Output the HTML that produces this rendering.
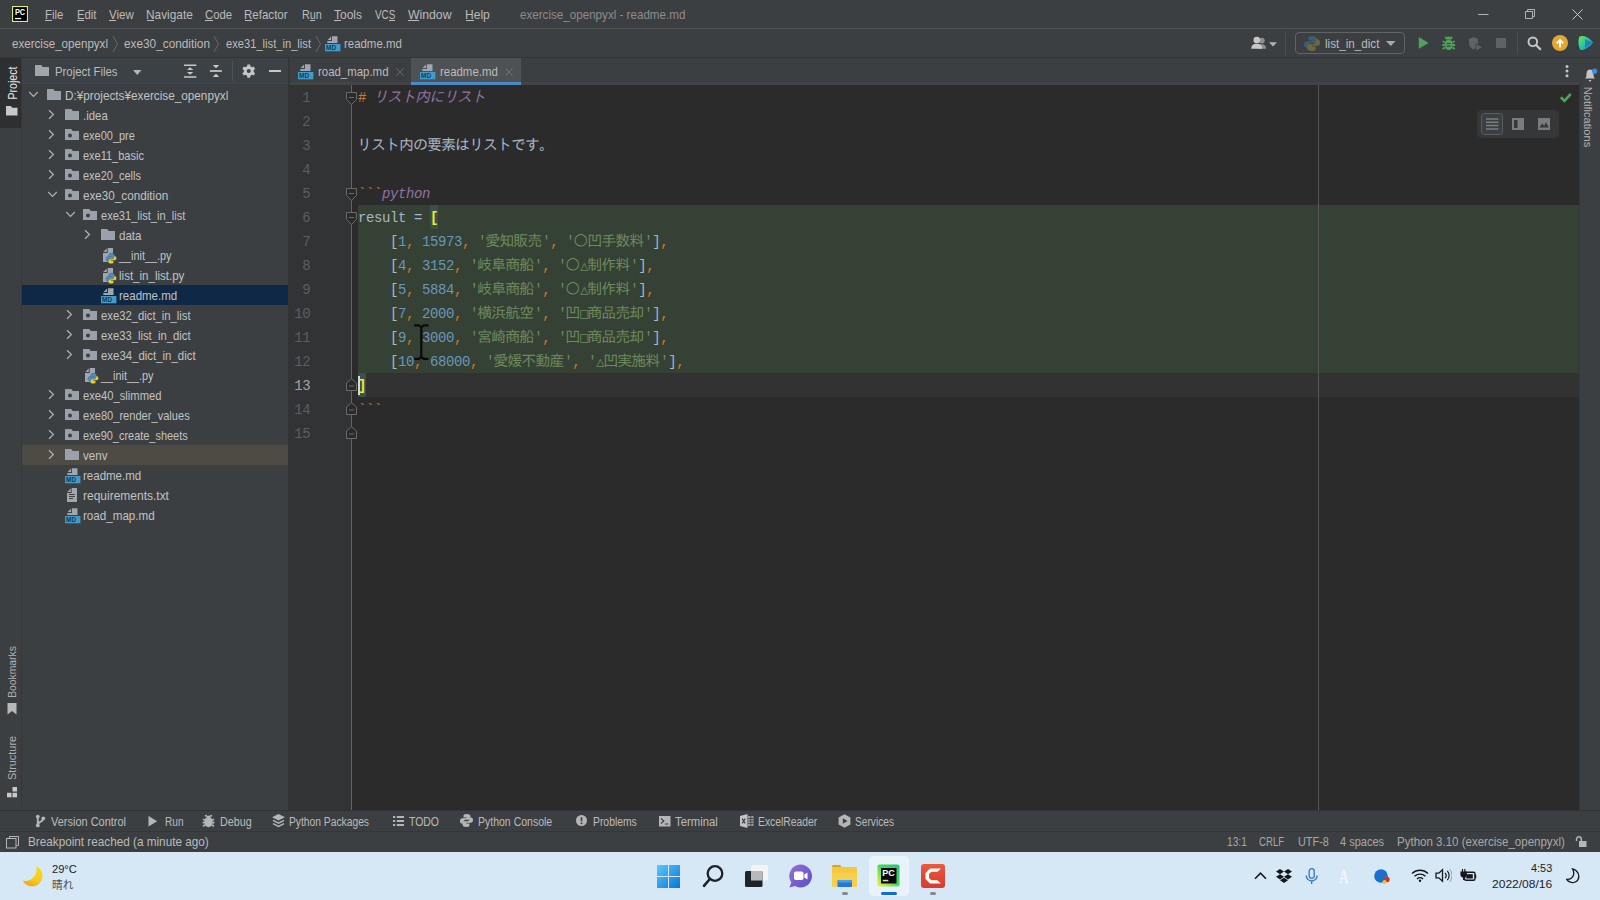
<!DOCTYPE html>
<html lang="ja"><head><meta charset="utf-8"><title>exercise_openpyxl - readme.md</title>
<style>
*{box-sizing:border-box}
html,body{margin:0;padding:0}
body{width:1600px;height:900px;overflow:hidden;background:#3c3f41;position:relative;font-family:"Liberation Sans","Noto Sans CJK JP",sans-serif}
#root{position:absolute;left:0;top:0;width:1600px;height:900px;overflow:hidden}
#root>div,#root>svg,#root>span{position:absolute;display:block}
.u{font-family:"Liberation Sans","Noto Sans CJK JP",sans-serif;line-height:20px;white-space:pre;transform-origin:0 50%}
.m{font-family:"Liberation Mono","Noto Sans CJK JP",monospace;line-height:20px;white-space:pre;transform-origin:0 50%;letter-spacing:-0.4px}
.j{font-family:IPAGothic,"Noto Sans CJK JP",sans-serif;font-size:15px;letter-spacing:-1px;line-height:0;margin-left:-1px;margin-right:1px}
.g{font-family:"DejaVu Sans Mono",monospace;font-size:13.3px;letter-spacing:0;line-height:0}
</style></head>
<body><div id="root">
<div style="left:0px;top:0px;width:1600px;height:28px;background:#3c3f41;"></div>
<div style="left:0px;top:28px;width:1600px;height:1px;background:#505254;"></div>
<div style="left:0px;top:29px;width:1600px;height:28px;background:#3c3f41;"></div>
<div style="left:0px;top:57px;width:1600px;height:1px;background:#333537;"></div>
<div style="left:0px;top:58px;width:22px;height:752px;background:#3c3f41;"></div>
<div style="left:0px;top:58px;width:21px;height:70px;background:#2d2f30;"></div>
<div style="left:21px;top:58px;width:1px;height:752px;background:#353739;"></div>
<div style="left:22px;top:58px;width:266px;height:26px;background:#3c4146;border-bottom:2px solid #3b444f"></div>
<div style="left:22px;top:84px;width:266px;height:726px;background:#3c3f41;"></div>
<div style="left:22px;top:285px;width:266px;height:20px;background:#0f2846;"></div>
<div style="left:22px;top:445px;width:266px;height:20px;background:#4e4b45;"></div>
<div style="left:288px;top:58px;width:2px;height:27px;background:#35383b;"></div>
<div style="left:290px;top:58px;width:1289px;height:27px;background:#3c3f41;"></div>
<div style="left:290px;top:82px;width:1289px;height:3px;background:#424446;"></div>
<div style="left:411px;top:58px;width:110px;height:24px;background:#4e5254;"></div>
<div style="left:411px;top:82px;width:110px;height:3px;background:#4a88c7;"></div>
<div style="left:290px;top:85px;width:1290px;height:725px;background:#2b2b2b;"></div>
<div style="left:288px;top:85px;width:64px;height:725px;background:#313335;"></div>
<div style="left:358px;top:205px;width:1221px;height:168px;background:#364135;"></div>
<div style="left:358px;top:373px;width:1221px;height:24px;background:#323232;"></div>
<div style="left:430px;top:205px;width:8px;height:24px;background:#3d4f4b;"></div>
<div style="left:358px;top:373px;width:8px;height:24px;background:#3d4f4b;"></div>
<div style="left:351px;top:85px;width:1px;height:725px;background:#646464;"></div>
<div style="left:1318px;top:85px;width:1px;height:725px;background:#555555;"></div>
<div style="left:1579px;top:58px;width:21px;height:752px;background:#3c3f41;"></div>
<div style="left:1579px;top:85px;width:1px;height:725px;background:#353739;"></div>
<div style="left:0px;top:810px;width:1600px;height:42px;background:#3c3f41;"></div>
<div style="left:0px;top:810px;width:1600px;height:1px;background:#323232;"></div>
<div style="left:0px;top:831px;width:1600px;height:1px;background:#343638;"></div>
<div style="left:0px;top:852px;width:1600px;height:48px;background:#d6e7f6;"></div>
<div style="left:870px;top:857px;width:38px;height:38px;background:#e9f1fa;border-radius:4px;box-shadow:0 0 0 1px rgba(255,255,255,.5)"></div>
<svg style="left:28.3px;top:91px;" width="11" height="7" viewBox="0 0 11 7"><path d="M1.200 1l4.300 4.400L9.800 1" fill="none" stroke="#afb1b3" stroke-width="1.200"/></svg>
<svg style="left:47px;top:89px;" width="14" height="11" viewBox="0 0 14 11"><path d="M0 0h6.2l1.6 2H14v11H0z" fill="#9ba1ab"/></svg>
<svg style="left:48.3px;top:109px;" width="7" height="11" viewBox="0 0 7 11"><path d="M1 1.2l4.4 4.3L1 9.800" fill="none" stroke="#afb1b3" stroke-width="1.200"/></svg>
<svg style="left:65px;top:109px;" width="14" height="11" viewBox="0 0 14 11"><path d="M0 0h6.2l1.6 2H14v11H0z" fill="#9ba1ab"/></svg>
<svg style="left:48.3px;top:129px;" width="7" height="11" viewBox="0 0 7 11"><path d="M1 1.2l4.4 4.3L1 9.800" fill="none" stroke="#afb1b3" stroke-width="1.200"/></svg>
<svg style="left:65px;top:129px;" width="14" height="11" viewBox="0 0 14 11"><path d="M0 0h6.2l1.6 2H14v11H0z" fill="#9ba1ab"/><circle cx="5" cy="6.6" r="2" fill="#3c3f41"/></svg>
<svg style="left:48.3px;top:149px;" width="7" height="11" viewBox="0 0 7 11"><path d="M1 1.2l4.4 4.3L1 9.800" fill="none" stroke="#afb1b3" stroke-width="1.200"/></svg>
<svg style="left:65px;top:149px;" width="14" height="11" viewBox="0 0 14 11"><path d="M0 0h6.2l1.6 2H14v11H0z" fill="#9ba1ab"/><circle cx="5" cy="6.6" r="2" fill="#3c3f41"/></svg>
<svg style="left:48.3px;top:169px;" width="7" height="11" viewBox="0 0 7 11"><path d="M1 1.2l4.4 4.3L1 9.800" fill="none" stroke="#afb1b3" stroke-width="1.200"/></svg>
<svg style="left:65px;top:169px;" width="14" height="11" viewBox="0 0 14 11"><path d="M0 0h6.2l1.6 2H14v11H0z" fill="#9ba1ab"/><circle cx="5" cy="6.6" r="2" fill="#3c3f41"/></svg>
<svg style="left:46.5px;top:191px;" width="11" height="7" viewBox="0 0 11 7"><path d="M1.200 1l4.300 4.400L9.800 1" fill="none" stroke="#afb1b3" stroke-width="1.200"/></svg>
<svg style="left:65px;top:189px;" width="14" height="11" viewBox="0 0 14 11"><path d="M0 0h6.2l1.6 2H14v11H0z" fill="#9ba1ab"/><circle cx="5" cy="6.6" r="2" fill="#3c3f41"/></svg>
<svg style="left:64.5px;top:211px;" width="11" height="7" viewBox="0 0 11 7"><path d="M1.200 1l4.300 4.400L9.800 1" fill="none" stroke="#afb1b3" stroke-width="1.200"/></svg>
<svg style="left:83px;top:209px;" width="14" height="11" viewBox="0 0 14 11"><path d="M0 0h6.2l1.6 2H14v11H0z" fill="#9ba1ab"/><circle cx="5" cy="6.6" r="2" fill="#3c3f41"/></svg>
<svg style="left:84.3px;top:229px;" width="7" height="11" viewBox="0 0 7 11"><path d="M1 1.2l4.4 4.3L1 9.800" fill="none" stroke="#afb1b3" stroke-width="1.200"/></svg>
<svg style="left:101px;top:229px;" width="14" height="11" viewBox="0 0 14 11"><path d="M0 0h6.2l1.6 2H14v11H0z" fill="#9ba1ab"/></svg>
<svg style="left:103px;top:248px;" width="14" height="16" viewBox="0 0 14 16"><path d="M4.700 0H10v14H0V4.900h4.700z" fill="#a0a5ae"/><path d="M.200 4h3.600V.400z" fill="#a0a5ae"/><g transform="translate(3.200 5.400) scale(.64)"><path d="M7.800 0C5 0 4.300 1.100 4.300 2.500v1.900h3.800v.8H2.700C1 5.200 0 6.400 0 8.500s1 3.300 2.600 3.300h1.700V9.700c0-1.500 1.200-2.700 2.700-2.700h3.700c1.200 0 2.100-1 2.100-2.200V2.500C12.800 1.100 11.300 0 7.800 0z" fill="#3e8fd0" stroke="#3c3f41" stroke-width=".8"/><path d="M8.200 16c2.800 0 3.500-1.100 3.500-2.500v-1.900H7.900v-.8h5.400c1.700 0 2.700-1.200 2.700-3.300s-1-3.300-2.600-3.300h-1.700v2.100c0 1.500-1.200 2.700-2.700 2.700H5.300c-1.200 0-2.100 1-2.100 2.200v2.300c0 1.400 1.500 2.500 5 2.500z" fill="#f2d21f" stroke="#3c3f41" stroke-width=".5"/><path d="M7.800 0C5 0 4.300 1.100 4.300 2.500v1.900h3.800v.8H2.700C1 5.200 0 6.400 0 8.500s1 3.300 2.600 3.300h1.700V9.700c0-1.500 1.200-2.700 2.700-2.700h3.700c1.200 0 2.100-1 2.100-2.200V2.500C12.800 1.100 11.300 0 7.800 0z" fill="#3e8fd0"/></g></svg>
<svg style="left:103px;top:268px;" width="14" height="16" viewBox="0 0 14 16"><path d="M4.700 0H10v14H0V4.900h4.700z" fill="#a0a5ae"/><path d="M.200 4h3.600V.400z" fill="#a0a5ae"/><g transform="translate(3.200 5.400) scale(.64)"><path d="M7.800 0C5 0 4.300 1.100 4.300 2.500v1.900h3.800v.8H2.700C1 5.200 0 6.400 0 8.500s1 3.300 2.600 3.300h1.700V9.700c0-1.500 1.200-2.700 2.700-2.700h3.700c1.200 0 2.100-1 2.100-2.200V2.500C12.800 1.100 11.300 0 7.800 0z" fill="#3e8fd0" stroke="#3c3f41" stroke-width=".8"/><path d="M8.200 16c2.800 0 3.500-1.100 3.500-2.500v-1.900H7.900v-.8h5.400c1.700 0 2.700-1.200 2.700-3.300s-1-3.300-2.600-3.300h-1.700v2.100c0 1.500-1.200 2.700-2.700 2.700H5.300c-1.200 0-2.100 1-2.100 2.200v2.300c0 1.400 1.500 2.500 5 2.500z" fill="#f2d21f" stroke="#3c3f41" stroke-width=".5"/><path d="M7.800 0C5 0 4.300 1.100 4.300 2.500v1.900h3.800v.8H2.700C1 5.200 0 6.400 0 8.500s1 3.300 2.600 3.300h1.700V9.700c0-1.500 1.200-2.700 2.700-2.700h3.700c1.200 0 2.100-1 2.100-2.200V2.500C12.800 1.100 11.300 0 7.800 0z" fill="#3e8fd0"/></g></svg>
<svg style="left:100.5px;top:288px;" width="16" height="16" viewBox="0 0 16 16"><path d="M7 .2h5.500V7H2.300V4.900H7z" fill="#a0a5ae"/><path d="M2.500 4h3.600V.500z" fill="#a0a5ae"/><rect x="0" y="8" width="15.400" height="7.300" fill="#439bc8"/><text x="1.100" y="14.100" font-family="Liberation Sans,sans-serif" font-size="6.800" font-weight="bold" fill="#103d5e" textLength="10" lengthAdjust="spacingAndGlyphs">MD</text></svg>
<svg style="left:66.3px;top:309px;" width="7" height="11" viewBox="0 0 7 11"><path d="M1 1.2l4.4 4.3L1 9.800" fill="none" stroke="#afb1b3" stroke-width="1.200"/></svg>
<svg style="left:83px;top:309px;" width="14" height="11" viewBox="0 0 14 11"><path d="M0 0h6.2l1.6 2H14v11H0z" fill="#9ba1ab"/><circle cx="5" cy="6.6" r="2" fill="#3c3f41"/></svg>
<svg style="left:66.3px;top:329px;" width="7" height="11" viewBox="0 0 7 11"><path d="M1 1.2l4.4 4.3L1 9.800" fill="none" stroke="#afb1b3" stroke-width="1.200"/></svg>
<svg style="left:83px;top:329px;" width="14" height="11" viewBox="0 0 14 11"><path d="M0 0h6.2l1.6 2H14v11H0z" fill="#9ba1ab"/><circle cx="5" cy="6.6" r="2" fill="#3c3f41"/></svg>
<svg style="left:66.3px;top:349px;" width="7" height="11" viewBox="0 0 7 11"><path d="M1 1.2l4.4 4.3L1 9.800" fill="none" stroke="#afb1b3" stroke-width="1.200"/></svg>
<svg style="left:83px;top:349px;" width="14" height="11" viewBox="0 0 14 11"><path d="M0 0h6.2l1.6 2H14v11H0z" fill="#9ba1ab"/><circle cx="5" cy="6.6" r="2" fill="#3c3f41"/></svg>
<svg style="left:85px;top:368px;" width="14" height="16" viewBox="0 0 14 16"><path d="M4.700 0H10v14H0V4.900h4.700z" fill="#a0a5ae"/><path d="M.200 4h3.600V.400z" fill="#a0a5ae"/><g transform="translate(3.200 5.400) scale(.64)"><path d="M7.800 0C5 0 4.300 1.100 4.300 2.500v1.900h3.800v.8H2.700C1 5.200 0 6.400 0 8.500s1 3.300 2.600 3.300h1.700V9.700c0-1.500 1.200-2.700 2.700-2.700h3.700c1.200 0 2.100-1 2.100-2.200V2.500C12.800 1.100 11.300 0 7.800 0z" fill="#3e8fd0" stroke="#3c3f41" stroke-width=".8"/><path d="M8.200 16c2.800 0 3.500-1.100 3.500-2.500v-1.900H7.900v-.8h5.400c1.700 0 2.700-1.200 2.700-3.300s-1-3.300-2.600-3.300h-1.700v2.100c0 1.500-1.200 2.700-2.700 2.700H5.300c-1.200 0-2.100 1-2.100 2.200v2.300c0 1.400 1.500 2.500 5 2.500z" fill="#f2d21f" stroke="#3c3f41" stroke-width=".5"/><path d="M7.800 0C5 0 4.300 1.100 4.300 2.500v1.900h3.800v.8H2.700C1 5.200 0 6.400 0 8.500s1 3.300 2.600 3.300h1.700V9.700c0-1.500 1.200-2.700 2.700-2.700h3.700c1.200 0 2.100-1 2.100-2.200V2.500C12.800 1.100 11.300 0 7.800 0z" fill="#3e8fd0"/></g></svg>
<svg style="left:48.3px;top:389px;" width="7" height="11" viewBox="0 0 7 11"><path d="M1 1.2l4.4 4.3L1 9.800" fill="none" stroke="#afb1b3" stroke-width="1.200"/></svg>
<svg style="left:65px;top:389px;" width="14" height="11" viewBox="0 0 14 11"><path d="M0 0h6.2l1.6 2H14v11H0z" fill="#9ba1ab"/><circle cx="5" cy="6.6" r="2" fill="#3c3f41"/></svg>
<svg style="left:48.3px;top:409px;" width="7" height="11" viewBox="0 0 7 11"><path d="M1 1.2l4.4 4.3L1 9.800" fill="none" stroke="#afb1b3" stroke-width="1.200"/></svg>
<svg style="left:65px;top:409px;" width="14" height="11" viewBox="0 0 14 11"><path d="M0 0h6.2l1.6 2H14v11H0z" fill="#9ba1ab"/><circle cx="5" cy="6.6" r="2" fill="#3c3f41"/></svg>
<svg style="left:48.3px;top:429px;" width="7" height="11" viewBox="0 0 7 11"><path d="M1 1.2l4.4 4.3L1 9.800" fill="none" stroke="#afb1b3" stroke-width="1.200"/></svg>
<svg style="left:65px;top:429px;" width="14" height="11" viewBox="0 0 14 11"><path d="M0 0h6.2l1.6 2H14v11H0z" fill="#9ba1ab"/><circle cx="5" cy="6.6" r="2" fill="#3c3f41"/></svg>
<svg style="left:48.3px;top:449px;" width="7" height="11" viewBox="0 0 7 11"><path d="M1 1.2l4.4 4.3L1 9.800" fill="none" stroke="#afb1b3" stroke-width="1.200"/></svg>
<svg style="left:65px;top:449px;" width="14" height="11" viewBox="0 0 14 11"><path d="M0 0h6.2l1.6 2H14v11H0z" fill="#9ba1ab"/></svg>
<svg style="left:64.5px;top:468px;" width="16" height="16" viewBox="0 0 16 16"><path d="M7 .2h5.500V7H2.300V4.900H7z" fill="#a0a5ae"/><path d="M2.500 4h3.600V.500z" fill="#a0a5ae"/><rect x="0" y="8" width="15.400" height="7.300" fill="#439bc8"/><text x="1.100" y="14.100" font-family="Liberation Sans,sans-serif" font-size="6.800" font-weight="bold" fill="#103d5e" textLength="10" lengthAdjust="spacingAndGlyphs">MD</text></svg>
<svg style="left:67px;top:488px;" width="10" height="14" viewBox="0 0 10 14"><path d="M4.700 0H10v14H0V4.900h4.700z" fill="#a0a5ae"/><path d="M.200 4h3.600V.400z" fill="#a0a5ae"/><path d="M2 6.500h5.800M2 8.500h5.800M2 10.500h4" stroke="#3c3f41" stroke-width="1"/></svg>
<svg style="left:64.5px;top:508px;" width="16" height="16" viewBox="0 0 16 16"><path d="M7 .2h5.500V7H2.300V4.900H7z" fill="#a0a5ae"/><path d="M2.500 4h3.600V.500z" fill="#a0a5ae"/><rect x="0" y="8" width="15.400" height="7.300" fill="#439bc8"/><text x="1.100" y="14.100" font-family="Liberation Sans,sans-serif" font-size="6.800" font-weight="bold" fill="#103d5e" textLength="10" lengthAdjust="spacingAndGlyphs">MD</text></svg>
<svg style="left:12px;top:6px;" width="16" height="16" viewBox="0 0 16 16"><rect width="16" height="16" fill="#d6f25c"/><rect x="1.100" y="1.100" width="13.800" height="13.800" fill="#000"/><text x="2.900" y="9.100" font-family="Liberation Sans,sans-serif" font-weight="bold" font-size="8.200" fill="#fff" textLength="10.300" lengthAdjust="spacingAndGlyphs">PC</text><rect x="3" y="11.900" width="6.200" height="1.300" fill="#fff"/></svg>
<svg style="left:1477px;top:9px;" width="12" height="11" viewBox="0 0 12 11"><path d="M1 5.500h10.500" stroke="#b4b4b4" stroke-width="1"/></svg>
<svg style="left:1524px;top:8px;" width="12" height="12" viewBox="0 0 12 12"><path d="M1.500 3.500h7v7h-7z M3.500 3.500v-2h7v7h-2" fill="none" stroke="#b4b4b4" stroke-width="1"/></svg>
<svg style="left:1572px;top:9px;" width="11" height="11" viewBox="0 0 11 11"><path d="M.5.500l10 10M10.500.500l-10 10" stroke="#c8c8c8" stroke-width="1"/></svg>
<svg style="left:111.5px;top:35px;" width="7" height="18" viewBox="0 0 7 18"><path d="M1 1l4.500 8L1 17" fill="none" stroke="#66696b" stroke-width="1"/></svg>
<svg style="left:213px;top:35px;" width="7" height="18" viewBox="0 0 7 18"><path d="M1 1l4.500 8L1 17" fill="none" stroke="#66696b" stroke-width="1"/></svg>
<svg style="left:314.5px;top:35px;" width="7" height="18" viewBox="0 0 7 18"><path d="M1 1l4.500 8L1 17" fill="none" stroke="#66696b" stroke-width="1"/></svg>
<svg style="left:325px;top:35.5px;" width="16" height="16" viewBox="0 0 16 16"><path d="M7 .2h5.500V7H2.300V4.900H7z" fill="#a0a5ae"/><path d="M2.500 4h3.600V.500z" fill="#a0a5ae"/><rect x="0" y="8" width="15.400" height="7.300" fill="#439bc8"/><text x="1.100" y="14.100" font-family="Liberation Sans,sans-serif" font-size="6.800" font-weight="bold" fill="#103d5e" textLength="10" lengthAdjust="spacingAndGlyphs">MD</text></svg>
<svg style="left:1251px;top:36px;" width="27" height="14" viewBox="0 0 27 14"><circle cx="10.800" cy="4.600" r="2.900" fill="#8d8f91"/><path d="M6.500 12.800c0-3.300 1.600-4.600 4.300-4.600s4.300 1.300 4.300 4.600z" fill="#8d8f91"/><circle cx="5.800" cy="4" r="3.300" fill="#c8c8c8"/><path d="M.300 12.800c0-3.600 2-5 5.500-5s5.500 1.400 5.500 5z" fill="#c8c8c8"/><path d="M18 6.200h8l-4 4.300z" fill="#b0b2b4"/></svg>
<div style="left:1285px;top:31px;width:1px;height:25px;background:#4d5052;"></div>
<div style="left:1295px;top:32px;width:110px;height:22px;border:1px solid #616365;border-radius:4px"></div>
<svg style="left:1304px;top:36px;" width="16" height="15" viewBox="0 0 16 15"><g opacity=".62"><path d="M7.800 0C5 0 4.300 1.100 4.300 2.500v1.900h3.800v.8H2.700C1 5.200 0 6.400 0 8.500s1 3.300 2.600 3.300h1.700V9.700c0-1.500 1.200-2.700 2.700-2.700h3.700c1.200 0 2.100-1 2.100-2.200V2.500C12.800 1.100 11.300 0 7.800 0z" fill="#3d6f94"/><path d="M8.200 15c2.800 0 3.500-1.100 3.500-2.500v-1.900H7.900v-.8h5.400c1.700 0 2.700-1.200 2.700-3.300s-1-3.300-2.600-3.300h-1.700v2.100c0 1.500-1.200 2.700-2.700 2.700H5.300c-1.200 0-2.100 1-2.100 2.200v2.300c0 1.400 1.500 2.500 5 2.500z" fill="#8f8437"/></g></svg>
<svg style="left:1386px;top:41px;" width="10" height="6" viewBox="0 0 10 6"><path d="M0 0h9.500L4.750 5z" fill="#a8aaac"/></svg>
<svg style="left:1418px;top:37px;" width="11" height="12" viewBox="0 0 11 12"><path d="M.800 0l9.800 5.900-9.800 5.900z" fill="#4fa25b"/></svg>
<svg style="left:1442px;top:36px;" width="14" height="15" viewBox="0 0 14 15"><ellipse cx="6.700" cy="8.700" rx="4.200" ry="5.300" fill="#4fa25b"/><path d="M3.700 3.600a3 3 0 0 1 6 0z" fill="#4fa25b"/><path d="M4.500 2.600L3.200.700M8.900 2.600L10.200.700M2.800 6.300L.700 5.200M10.600 6.300l2.100-1.100M2.500 9H.300M10.900 9h2.200M2.800 11.600L.700 13M10.600 11.600l2.100 1.400" stroke="#4fa25b" stroke-width="1.800"/><path d="M4.700 7.500h4M4.700 10.200h4" stroke="#3c3f41" stroke-width="1.200"/></svg>
<svg style="left:1468px;top:37px;" width="15" height="14" viewBox="0 0 15 14"><path d="M1 1.500C3 1.500 4.500.800 5.500 0c1 .800 2.500 1.500 4.500 1.500V6c0 3-2 5.500-4.500 6.500C3 11.500 1 9 1 6z" fill="#606366"/><path d="M8 6.500l6.500 3.700L8 14z" fill="#606366" stroke="#3c3f41" stroke-width=".800"/></svg>
<div style="left:1496px;top:38px;width:10px;height:10px;background:#5e6062;"></div>
<div style="left:1517px;top:32px;width:1px;height:21px;background:#4d5052;"></div>
<svg style="left:1527px;top:36px;" width="15" height="15" viewBox="0 0 15 15"><circle cx="5.800" cy="5.800" r="4.300" fill="none" stroke="#c8c8c8" stroke-width="1.900"/><path d="M9 9l4.800 4.800" stroke="#c8c8c8" stroke-width="2.200"/></svg>
<svg style="left:1552px;top:35px;" width="16" height="16" viewBox="0 0 16 16"><circle cx="8" cy="8" r="8" fill="#e2a832"/><path d="M8 12.500V5.500M4.800 8.300L8 5l3.200 3.300" fill="none" stroke="#fff" stroke-width="1.800"/></svg>
<svg style="left:1578px;top:35px;" width="16" height="16" viewBox="0 0 16 16"><defs><linearGradient id="tbg" x1="0" y1="0" x2="1" y2="1"><stop offset="0" stop-color="#7ee04f"/><stop offset=".5" stop-color="#22c9a6"/><stop offset="1" stop-color="#2a6fd6"/></linearGradient></defs><path d="M1.500 1.500C6 -.500 12 3 15 7.500 12 12 6 15.500 2.500 15 0 11 0 5 1.500 1.500z" fill="url(#tbg)"/><path d="M7 4l7.500 3.500L7 13z" fill="#1e5fc4" opacity=".6"/></svg>
<svg style="left:35px;top:65px;" width="14" height="11" viewBox="0 0 14 11"><path d="M0 0h6.2l1.6 2H14v11H0z" fill="#a0a6ae"/></svg>
<svg style="left:133px;top:70px;" width="9" height="6" viewBox="0 0 9 6"><path d="M0 0h8.500L4.250 5z" fill="#b4b6b8"/></svg>
<svg style="left:184px;top:64px;" width="13" height="15" viewBox="0 0 13 15"><path d="M0 1.150h12.300M0 12.950h12.300" stroke="#c8c8c8" stroke-width="1.500"/><path d="M6.100 3.200l3.200 2.700h-6.400zM6.100 10.700l3.200-2.700h-6.400z" fill="#c8c8c8"/></svg>
<svg style="left:209px;top:64px;" width="14" height="15" viewBox="0 0 14 15"><path d="M.900 7h12" stroke="#c8c8c8" stroke-width="1.700"/><path d="M7 4.300l3.300-3.300h-6.600zM7 9.700l3.300 3.400h-6.600z" fill="#c8c8c8"/></svg>
<div style="left:232px;top:61px;width:1px;height:20px;background:#4f5254;"></div>
<svg style="left:242px;top:64px;" width="14" height="15" viewBox="0 0 14 15"><path d="M5.14 2.37L5.36 0.55L8.14 0.55L8.36 2.37L10.05 3.34L11.73 2.62L13.12 5.03L11.65 6.12L11.65 8.08L13.12 9.17L11.73 11.58L10.05 10.86L8.36 11.83L8.14 13.65L5.36 13.65L5.14 11.83L3.45 10.86L1.77 11.58L0.38 9.17L1.85 8.08L1.85 6.12L0.38 5.03L1.77 2.62L3.45 3.34z" fill="#c5c5c5"/><circle cx="6.75" cy="7.1" r="2" fill="#3c4146"/></svg>
<div style="left:269px;top:70px;width:12px;height:2px;background:#c5c5c5;"></div>
<svg style="left:298px;top:64px;" width="16" height="16" viewBox="0 0 16 16"><path d="M7 .2h5.500V7H2.300V4.900H7z" fill="#a0a5ae"/><path d="M2.500 4h3.600V.500z" fill="#a0a5ae"/><rect x="0" y="8" width="15.400" height="7.300" fill="#439bc8"/><text x="1.100" y="14.100" font-family="Liberation Sans,sans-serif" font-size="6.800" font-weight="bold" fill="#103d5e" textLength="10" lengthAdjust="spacingAndGlyphs">MD</text></svg>
<svg style="left:420px;top:64px;" width="16" height="16" viewBox="0 0 16 16"><path d="M7 .2h5.500V7H2.300V4.900H7z" fill="#a0a5ae"/><path d="M2.500 4h3.600V.500z" fill="#a0a5ae"/><rect x="0" y="8" width="15.400" height="7.300" fill="#439bc8"/><text x="1.100" y="14.100" font-family="Liberation Sans,sans-serif" font-size="6.800" font-weight="bold" fill="#103d5e" textLength="10" lengthAdjust="spacingAndGlyphs">MD</text></svg>
<svg style="left:396px;top:68px;" width="8" height="8" viewBox="0 0 8 8"><path d="M.500.500l7 7M7.500.500l-7 7" stroke="#686b6d" stroke-width="1"/></svg>
<svg style="left:505px;top:68px;" width="8" height="8" viewBox="0 0 8 8"><path d="M.500.500l7 7M7.500.500l-7 7" stroke="#72767a" stroke-width="1"/></svg>
<svg style="left:1565px;top:64px;" width="4" height="14" viewBox="0 0 4 14"><circle cx="2" cy="2.400" r="1.500" fill="#c5c5c5"/><circle cx="2" cy="7.100" r="1.500" fill="#c5c5c5"/><circle cx="2" cy="11.800" r="1.500" fill="#c5c5c5"/></svg>
<svg style="left:1584px;top:68px;" width="14" height="15" viewBox="0 0 14 15"><path d="M1 10.500c1.500-1 1.500-3 1.500-5C2.500 3 4 1.500 6 1.500S9.500 3 9.500 5.500c0 2 0 4 1.500 5z" fill="#c5c5c5"/><path d="M4.500 12h3L6 14z" fill="#c5c5c5"/><circle cx="10.600" cy="3.200" r="2.600" fill="#3d8fe0"/></svg>
<svg style="left:1559px;top:92px;" width="14" height="11" viewBox="0 0 14 11"><path d="M1.800 5.300l3.600 3.500L11.800 2" fill="none" stroke="#4fa25b" stroke-width="2.600"/></svg>
<div style="left:1477px;top:110px;width:82px;height:28px;background:#353739;border-radius:5px"></div>
<div style="left:1481px;top:113px;width:22px;height:22px;background:#3c3f41;border:1px solid #595c5e;border-radius:3px"></div>
<svg style="left:1486px;top:118px;" width="13" height="12" viewBox="0 0 13 12"><path d="M0 1h12.500M0 4.300h12.500M0 7.600h12.500M0 10.900h12.500" stroke="#7d7f81" stroke-width="1.500"/></svg>
<svg style="left:1512px;top:118px;" width="12" height="12" viewBox="0 0 12 12"><rect width="12" height="12" fill="#7a7c7e"/><rect x="2" y="2" width="3.500" height="8" fill="#353739"/></svg>
<svg style="left:1538px;top:118px;" width="12" height="12" viewBox="0 0 12 12"><rect width="12" height="12" fill="#7a7c7e"/><path d="M1.500 9.500l2.700-4.300 1.900 2.800 1.900-3.800 2.800 5.300z" fill="#353739"/></svg>
<svg style="left:346px;top:92px;" width="11" height="13" viewBox="0 0 11 13"><path d="M.500.500h10v7L5.500 12.500.500 7.500z" fill="#2b2b2b" stroke="#6a6a6a" stroke-width="1"/><path d="M3 5.500h5" stroke="#6a6a6a" stroke-width="1"/></svg>
<svg style="left:346px;top:188px;" width="11" height="13" viewBox="0 0 11 13"><path d="M.500.500h10v7L5.500 12.500.500 7.500z" fill="#2b2b2b" stroke="#6a6a6a" stroke-width="1"/><path d="M3 5.500h5" stroke="#6a6a6a" stroke-width="1"/></svg>
<svg style="left:346px;top:212px;" width="11" height="13" viewBox="0 0 11 13"><path d="M.500.500h10v7L5.500 12.500.500 7.500z" fill="#2b2b2b" stroke="#6a6a6a" stroke-width="1"/><path d="M3 5.500h5" stroke="#6a6a6a" stroke-width="1"/></svg>
<svg style="left:346px;top:378px;" width="11" height="13" viewBox="0 0 11 13"><path d="M.500 12.500h10v-7.500L5.500.700.500 5z" fill="#2b2b2b" stroke="#6a6a6a" stroke-width="1"/><path d="M3 8h5" stroke="#6a6a6a" stroke-width="1"/></svg>
<svg style="left:346px;top:402px;" width="11" height="13" viewBox="0 0 11 13"><path d="M.500 12.500h10v-7.500L5.500.700.500 5z" fill="#2b2b2b" stroke="#6a6a6a" stroke-width="1"/><path d="M3 8h5" stroke="#6a6a6a" stroke-width="1"/></svg>
<svg style="left:346px;top:426px;" width="11" height="13" viewBox="0 0 11 13"><path d="M.500 12.500h10v-7.500L5.500.700.500 5z" fill="#2b2b2b" stroke="#6a6a6a" stroke-width="1"/><path d="M3 8h5" stroke="#6a6a6a" stroke-width="1"/></svg>
<svg style="left:6px;top:106px;" width="12" height="10" viewBox="0 0 12 10"><path d="M0 0h4.800l1.500 1.800H11.500V9.500H0z" fill="#c8c8c8"/></svg>
<svg style="left:7px;top:703px;" width="10" height="12" viewBox="0 0 10 12"><path d="M.500 0h9v11.500L5 8 .500 11.500z" fill="#b8b8b8"/></svg>
<svg style="left:7px;top:787px;" width="11" height="11" viewBox="0 0 11 11"><rect x="5.500" y="0" width="4.500" height="4.500" fill="#c8c8c8"/><rect x="0" y="5.800" width="4.500" height="4.500" fill="#c8c8c8"/><rect x="5.500" y="5.800" width="4.500" height="4.500" fill="#c8c8c8"/></svg>
<svg style="left:413px;top:323px;" width="17" height="38" viewBox="0 0 17 38"><path d="M1 2.400h5.800M9.700 2.400h5.800M1 35.800h5.800M9.700 35.800h5.800M8.300 3v32.200M6.500 2.900l1.800 1.400 1.800-1.400M6.500 35.300l1.800-1.400 1.800 1.400" fill="none" stroke="#0a0a0a" stroke-width="2.200"/></svg>
<svg style="left:35px;top:814px;" width="11" height="14" viewBox="0 0 11 14"><circle cx="2.800" cy="2.600" r="1.900" fill="#b4b6b8"/><circle cx="2.800" cy="11.400" r="1.900" fill="#b4b6b8"/><circle cx="8.300" cy="4.300" r="1.900" fill="#b4b6b8"/><path d="M2.800 2.500v9M8.300 4.500c0 3.800-5.500 2.800-5.500 6" fill="none" stroke="#b4b6b8" stroke-width="1.900"/></svg>
<svg style="left:148px;top:816px;" width="10" height="11" viewBox="0 0 10 11"><path d="M.500 0l8.700 5.300L.500 10.600z" fill="#b4b6b8"/></svg>
<svg style="left:202px;top:814px;" width="13" height="14" viewBox="0 0 13 14"><ellipse cx="6.500" cy="8.200" rx="4.300" ry="5.100" fill="#b4b6b8"/><path d="M3.800 3.600a2.800 2.800 0 0 1 5.400 0z" fill="#b4b6b8"/><path d="M4.500 2.600L3.400 1M8.500 2.600L9.600 1M2.800 6.200L1 5.200M10.200 6.200l1.800-1M2.500 8.600H.600M10.500 8.600h1.900M2.800 11l-1.800 1.200M10.200 11l1.800 1.200" stroke="#b4b6b8" stroke-width="1.700"/></svg>
<svg style="left:272px;top:814px;" width="13" height="14" viewBox="0 0 13 14"><path d="M6.500 0L13 3.300 6.500 6.600 0 3.300z" fill="#b4b6b8"/><path d="M1 6.300l5.500 2.800L12 6.300M1 9.600l5.500 2.800L12 9.600" fill="none" stroke="#b4b6b8" stroke-width="1.500"/></svg>
<svg style="left:393px;top:816px;" width="11" height="10" viewBox="0 0 11 10"><path d="M0 1h2.200M3.800 1H11M0 5h2.200M3.800 5H11M0 9h2.200M3.800 9H11" stroke="#b4b6b8" stroke-width="1.800"/></svg>
<svg style="left:460px;top:814px;" width="13" height="13" viewBox="0 0 13 13"><path d="M6.300 0C4 0 3.500.900 3.500 2v1.500h3.100v.700H2.200C.800 4.200 0 5.200 0 6.900s.800 2.700 2.100 2.700h1.400V7.900c0-1.200 1-2.200 2.200-2.200h3c1 0 1.700-.800 1.700-1.800V2c0-1.100-1.200-2-4.100-2z" fill="#b4b6b8"/><path d="M6.700 13c2.300 0 2.800-.900 2.800-2V9.500H6.400v-.700h4.400c1.400 0 2.200-1 2.200-2.700s-.800-2.700-2.100-2.700H9.500v1.700c0 1.200-1 2.200-2.200 2.200h-3c-1 0-1.700.800-1.700 1.800V11c0 1.100 1.200 2 4.100 2z" fill="#b4b6b8"/></svg>
<svg style="left:576px;top:815px;" width="11" height="11" viewBox="0 0 11 11"><circle cx="5.500" cy="5.500" r="5.500" fill="#b4b6b8"/><path d="M5.500 2.300v4" stroke="#3c3f41" stroke-width="1.700"/><circle cx="5.500" cy="8.300" r="1" fill="#3c3f41"/></svg>
<svg style="left:659px;top:816px;" width="12" height="11" viewBox="0 0 12 11"><rect width="11.500" height="10.500" fill="#b4b6b8"/><path d="M2 2.500l2.800 2.500L2 7.500M5.800 8h3.700" fill="none" stroke="#3c3f41" stroke-width="1.100"/></svg>
<svg style="left:740px;top:814px;" width="14" height="14" viewBox="0 0 14 14"><path d="M0 2l7.500-2v14L0 12z" fill="#c2c4c6"/><rect x="8" y="2" width="5.500" height="10" fill="#9a9c9e"/><path d="M8 4.500h5.500M8 7h5.500M8 9.500h5.500M10.800 2v10" stroke="#3c3f41" stroke-width=".800"/><path d="M2.200 4.700l3 4.600M5.200 4.700l-3 4.600" stroke="#3c3f41" stroke-width="1.200"/></svg>
<svg style="left:838px;top:814px;" width="13" height="14" viewBox="0 0 13 14"><path d="M6.500.300l5.900 3.300v6.800l-5.900 3.300L.600 10.400V3.600z" fill="#b4b6b8"/><path d="M4.800 4.200L9.500 7l-4.700 2.800z" fill="#3c3f41"/></svg>
<svg style="left:6px;top:836px;" width="13" height="13" viewBox="0 0 13 13"><path d="M3.500 2.500V.500h9v9h-2" fill="none" stroke="#b4b6b8" stroke-width="1"/><rect x=".500" y="2.500" width="9.500" height="9.500" fill="none" stroke="#b4b6b8" stroke-width="1"/></svg>
<svg style="left:1575.2px;top:836px;" width="12" height="12" viewBox="0 0 12 12"><path d="M1.500 5V3.200a2.400 2.400 0 0 1 4.800 0V5" fill="none" stroke="#b4b6b8" stroke-width="1.400"/><rect x="4" y="5" width="7.500" height="6" fill="#b4b6b8"/></svg>
<svg style="left:22px;top:865px;" width="22" height="22" viewBox="0 0 22 22"><defs><linearGradient id="mg" x1=".7" y1="0" x2=".3" y2="1"><stop offset="0" stop-color="#f3d91a"/><stop offset=".6" stop-color="#f5cc1c"/><stop offset="1" stop-color="#f0a31c"/></linearGradient></defs><path d="M13.800 1.200A10.400 10.400 0 1 1 .700 15.400A10.800 10.800 0 0 0 13.800 1.200z" fill="url(#mg)"/></svg>
<svg style="left:657px;top:865px;" width="23" height="23" viewBox="0 0 23 23"><defs><linearGradient id="wg" x1="0" y1="0" x2="1" y2="1"><stop offset="0" stop-color="#5cc8fa"/><stop offset="1" stop-color="#0a74d6"/></linearGradient></defs><path d="M0 0h11v11H0zM12 0h11v11H12zM0 12h11v11H0zM12 12h11v11H12z" fill="url(#wg)"/></svg>
<svg style="left:702px;top:864px;" width="24" height="24" viewBox="0 0 24 24"><circle cx="13" cy="9.500" r="7.300" fill="none" stroke="#1d2126" stroke-width="2.300"/><path d="M7.800 15L2 21.800" stroke="#1d2126" stroke-width="2.600" stroke-linecap="round"/></svg>
<svg style="left:744px;top:864px;" width="25" height="24" viewBox="0 0 25 24"><rect x="7" y="1" width="17" height="15.500" rx="1.500" fill="#f3f4f5"/><rect x="1" y="7" width="17.500" height="16" rx="1.500" fill="#20242a"/><rect x="7" y="7" width="11.500" height="9.500" fill="#b9b9b9"/></svg>
<svg style="left:788px;top:864px;" width="25" height="25" viewBox="0 0 25 25"><defs><linearGradient id="cg" x1="0" y1="0" x2="1" y2="1"><stop offset="0" stop-color="#9a6fd6"/><stop offset="1" stop-color="#5a4ec2"/></linearGradient></defs><path d="M12.500 .500a11.500 11.500 0 1 1-5.500 21.600L1.500 23.500l1.800-5A11.500 11.500 0 0 1 12.500 .500z" fill="url(#cg)"/><rect x="6" y="7.500" width="9.500" height="8.500" rx="1.800" fill="#fff"/><path d="M16.300 10.500l3.200-2v7l-3.200-2z" fill="#fff"/></svg>
<svg style="left:832px;top:864px;" width="26" height="24" viewBox="0 0 26 24"><path d="M0 2.500C0 1.500.800 1 1.800 1H8l2.200 2.500H0z" fill="#d9a514"/><rect x="0" y="3" width="25" height="20" rx="1.500" fill="#f6d04a"/><rect x="0" y="3" width="25" height="6" fill="#f2c338" opacity=".6"/><rect x="5.500" y="16" width="14.500" height="7" rx="1" fill="#2378d8"/><rect x="5.500" y="16" width="14.500" height="2.500" rx="1" fill="#4a9cf0"/></svg>
<div style="left:842px;top:892px;width:6px;height:3px;background:#85888c;border-radius:1.500px"></div>
<svg style="left:877px;top:864px;" width="23" height="23" viewBox="0 0 23 23"><defs><linearGradient id="pg2" x1="0" y1="1" x2="1" y2="0"><stop offset="0" stop-color="#f4f13a"/><stop offset=".55" stop-color="#3fd85a"/><stop offset="1" stop-color="#22c97a"/></linearGradient></defs><rect x=".500" y=".500" width="22" height="22" rx="2" fill="url(#pg2)"/><rect x="4" y="4" width="15.500" height="15.500" fill="#0a0a0a"/><text x="5.300" y="12.300" font-family="Liberation Sans,sans-serif" font-weight="bold" font-size="8.500" fill="#fff" textLength="12.500" lengthAdjust="spacingAndGlyphs">PC</text><rect x="5.800" y="15.800" width="5.500" height="1.500" fill="#d8d8d8"/></svg>
<div style="left:881px;top:892px;width:16px;height:3px;background:#0f6cd4;border-radius:1.500px"></div>
<svg style="left:921px;top:864px;" width="24" height="24" viewBox="0 0 24 24"><defs><linearGradient id="ct" x1="0" y1="0" x2="0" y2="1"><stop offset="0" stop-color="#ec5a3c"/><stop offset="1" stop-color="#d93a2c"/></linearGradient></defs><rect width="24" height="24" rx="3" fill="url(#ct)"/><path d="M20 4.500H9L4.500 9v6L9 19.500h11l-3.500-3.300H10.300L8 14V10l2.300-2.200h6.200z" fill="#fff"/></svg>
<div style="left:930px;top:892px;width:6px;height:3px;background:#85888c;border-radius:1.500px"></div>
<svg style="left:1254px;top:871px;" width="13" height="9" viewBox="0 0 13 9"><path d="M1 7.800L6.500 2.200 12 7.800" fill="none" stroke="#15181c" stroke-width="1.600"/></svg>
<svg style="left:1276px;top:868.7px;" width="16" height="15" viewBox="0 0 16 15"><path d="M4 0l4 2.600L4 5.200 0 2.600zM12 0l4 2.600-4 2.600-4-2.600zM0 7.800l4-2.600 4 2.600-4 2.600zM16 7.800l-4 2.600-4-2.600 4-2.600zM4 11.300l4-2.600 4 2.600-4 2.600z" fill="#15181c"/></svg>
<svg style="left:1305px;top:868px;" width="14" height="17" viewBox="0 0 14 17"><rect x="4.200" y=".700" width="5" height="9.500" rx="2.500" fill="none" stroke="#2f76d2" stroke-width="1.300"/><path d="M1.200 7.500a5.500 5.500 0 0 0 11 0M6.700 13v3" fill="none" stroke="#2f76d2" stroke-width="1.300"/></svg>
<svg style="left:1374px;top:868.6px;" width="17" height="16" viewBox="0 0 17 16"><circle cx="7" cy="7" r="6.800" fill="#1c6fd0"/><circle cx="13" cy="10.500" r="2.700" fill="#d93025"/><circle cx="10.500" cy="13" r="2" fill="#f5c518"/></svg>
<svg style="left:1411px;top:869px;" width="18" height="13" viewBox="0 0 18 13"><path d="M1 4.500a11.500 11.500 0 0 1 16 0M3.500 7.300a8 8 0 0 1 11 0M6 10a4.300 4.300 0 0 1 6 0" fill="none" stroke="#15181c" stroke-width="1.400"/><circle cx="9" cy="11.700" r="1.200" fill="#15181c"/></svg>
<svg style="left:1435px;top:868px;" width="17" height="15" viewBox="0 0 17 15"><path d="M1 5.200h2.800L7.500 1.800v11.400L3.800 9.800H1z" fill="none" stroke="#15181c" stroke-width="1.300"/><path d="M10 4.800a4 4 0 0 1 0 5.400M12.300 2.800a7 7 0 0 1 0 9.400" fill="none" stroke="#15181c" stroke-width="1.200"/><path d="M14.600 1a10 10 0 0 1 0 13" fill="none" stroke="#9aa3ad" stroke-width="1"/></svg>
<svg style="left:1460px;top:869.3px;" width="17" height="14" viewBox="0 0 17 14"><rect x="4.500" y="3.300" width="10.500" height="8" rx="1.500" fill="none" stroke="#15181c" stroke-width="1.400"/><rect x="6.300" y="5.200" width="6.500" height="4.300" fill="#15181c"/><path d="M15.500 5.800v3" stroke="#15181c" stroke-width="1.500"/><path d="M2.500 0v3M4.800 0v3M1 3h5.300v2.500a2.600 2.600 0 0 1-5.300 0zM3.600 8v3" stroke="#15181c" stroke-width="1.200" fill="#15181c"/></svg>
<svg style="left:1566px;top:868px;" width="14" height="16" viewBox="0 0 14 16"><path d="M6.500 1a7 7.500 0 0 1 1 6c-1 3-3.500 4.500-6.800 4.300C2.500 14 6 15.500 9.300 14 13.500 12 14 6.500 10.500 3 9.300 1.800 8 1.200 6.500 1z" fill="none" stroke="#15181c" stroke-width="1.300"/></svg>
<span class="u" style="left:45px;top:5.00px;font-size:13px;color:#bbb;transform:scaleX(0.8686);">File</span>
<div style="left:45.30px;top:20.3px;width:6.31px;height:1px;background:#bbb"></div>
<span class="u" style="left:76.5px;top:5.00px;font-size:13px;color:#bbb;transform:scaleX(0.8703);">Edit</span>
<div style="left:76.80px;top:20.3px;width:6.95px;height:1px;background:#bbb"></div>
<span class="u" style="left:109px;top:5.00px;font-size:13px;color:#bbb;transform:scaleX(0.8872);">View</span>
<div style="left:109.30px;top:20.3px;width:7.09px;height:1px;background:#bbb"></div>
<span class="u" style="left:146.2px;top:5.00px;font-size:13px;color:#bbb;transform:scaleX(0.9121);">Navigate</span>
<div style="left:146.50px;top:20.3px;width:7.96px;height:1px;background:#bbb"></div>
<span class="u" style="left:205px;top:5.00px;font-size:13px;color:#bbb;transform:scaleX(0.8752);">Code</span>
<div style="left:205.30px;top:20.3px;width:7.62px;height:1px;background:#bbb"></div>
<span class="u" style="left:244.4px;top:5.00px;font-size:13px;color:#bbb;transform:scaleX(0.8872);">Refactor</span>
<div style="left:244.70px;top:20.3px;width:7.73px;height:1px;background:#bbb"></div>
<span class="u" style="left:301.5px;top:5.00px;font-size:13px;color:#bbb;transform:scaleX(0.8299);">Run</span>
<div style="left:309.59px;top:20.3px;width:5.40px;height:1px;background:#bbb"></div>
<span class="u" style="left:334px;top:5.00px;font-size:13px;color:#bbb;transform:scaleX(0.9223);">Tools</span>
<div style="left:334.30px;top:20.3px;width:6.74px;height:1px;background:#bbb"></div>
<span class="u" style="left:375px;top:5.00px;font-size:13px;color:#bbb;transform:scaleX(0.7593);">VCS</span>
<div style="left:389.02px;top:20.3px;width:5.98px;height:1px;background:#bbb"></div>
<span class="u" style="left:408px;top:5.00px;font-size:13px;color:#bbb;transform:scaleX(0.9405);">Window</span>
<div style="left:408.30px;top:20.3px;width:10.95px;height:1px;background:#bbb"></div>
<span class="u" style="left:465.2px;top:5.00px;font-size:13px;color:#bbb;transform:scaleX(0.9271);">Help</span>
<div style="left:465.50px;top:20.3px;width:8.11px;height:1px;background:#bbb"></div>
<span class="u" style="left:520.2px;top:5.00px;font-size:13px;color:#8c8c8c;transform:scaleX(0.8941);">exercise_openpyxl - readme.md</span>
<span class="u" style="left:12px;top:34.00px;font-size:13px;color:#bbb;transform:scaleX(0.8915);">exercise_openpyxl</span>
<span class="u" style="left:124px;top:34.00px;font-size:13px;color:#bbb;transform:scaleX(0.9081);">exe30_condition</span>
<span class="u" style="left:226.2px;top:34.00px;font-size:13px;color:#bbb;transform:scaleX(0.8585);">exe31_list_in_list</span>
<span class="u" style="left:343.5px;top:34.00px;font-size:13px;color:#bbb;transform:scaleX(0.8791);">readme.md</span>
<span class="u" style="left:1324.6px;top:34.00px;font-size:13px;color:#bbb;transform:scaleX(0.8962);">list_in_dict</span>
<span class="u" style="left:54.5px;top:62.00px;font-size:13px;color:#bbb;transform:scaleX(0.8737);">Project Files</span>
<span class="u" style="left:317.5px;top:62.00px;font-size:13px;color:#bbb;transform:scaleX(0.8788);">road_map.md</span>
<span class="u" style="left:439.7px;top:62.00px;font-size:13px;color:#bbb;transform:scaleX(0.8791);">readme.md</span>
<span class="u" style="left:65px;top:86.00px;font-size:13px;color:#c2c2c2;transform:scaleX(0.9039);">D:¥projects¥exercise_openpyxl</span>
<span class="u" style="left:83px;top:106.00px;font-size:13px;color:#c2c2c2;transform:scaleX(0.8776);">.idea</span>
<span class="u" style="left:83px;top:126.00px;font-size:13px;color:#c2c2c2;transform:scaleX(0.8445);">exe00_pre</span>
<span class="u" style="left:83px;top:146.00px;font-size:13px;color:#c2c2c2;transform:scaleX(0.8453);">exe11_basic</span>
<span class="u" style="left:83px;top:166.00px;font-size:13px;color:#c2c2c2;transform:scaleX(0.8433);">exe20_cells</span>
<span class="u" style="left:83px;top:186.00px;font-size:13px;color:#c2c2c2;transform:scaleX(0.8997);">exe30_condition</span>
<span class="u" style="left:101px;top:206.00px;font-size:13px;color:#c2c2c2;transform:scaleX(0.8519);">exe31_list_in_list</span>
<span class="u" style="left:119px;top:226.00px;font-size:13px;color:#c2c2c2;transform:scaleX(0.8889);">data</span>
<span class="u" style="left:119px;top:246.00px;font-size:13px;color:#c2c2c2;transform:scaleX(0.8348);">__init__.py</span>
<span class="u" style="left:119px;top:266.00px;font-size:13px;color:#c2c2c2;transform:scaleX(0.8873);">list_in_list.py</span>
<span class="u" style="left:119px;top:286.00px;font-size:13px;color:#c2c2c2;transform:scaleX(0.8852);">readme.md</span>
<span class="u" style="left:101px;top:306.00px;font-size:13px;color:#c2c2c2;transform:scaleX(0.8669);">exe32_dict_in_list</span>
<span class="u" style="left:101px;top:326.00px;font-size:13px;color:#c2c2c2;transform:scaleX(0.8669);">exe33_list_in_dict</span>
<span class="u" style="left:101px;top:346.00px;font-size:13px;color:#c2c2c2;transform:scaleX(0.8783);">exe34_dict_in_dict</span>
<span class="u" style="left:101px;top:366.00px;font-size:13px;color:#c2c2c2;transform:scaleX(0.8348);">__init__.py</span>
<span class="u" style="left:83px;top:386.00px;font-size:13px;color:#c2c2c2;transform:scaleX(0.8616);">exe40_slimmed</span>
<span class="u" style="left:83px;top:406.00px;font-size:13px;color:#c2c2c2;transform:scaleX(0.8533);">exe80_render_values</span>
<span class="u" style="left:83px;top:426.00px;font-size:13px;color:#c2c2c2;transform:scaleX(0.8422);">exe90_create_sheets</span>
<span class="u" style="left:83px;top:446.00px;font-size:13px;color:#c2c2c2;transform:scaleX(0.8901);">venv</span>
<span class="u" style="left:83px;top:466.00px;font-size:13px;color:#c2c2c2;transform:scaleX(0.8852);">readme.md</span>
<span class="u" style="left:83px;top:486.00px;font-size:13px;color:#c2c2c2;transform:scaleX(0.9222);">requirements.txt</span>
<span class="u" style="left:83px;top:506.00px;font-size:13px;color:#c2c2c2;transform:scaleX(0.8938);">road_map.md</span>
<span class="u" style="left:51.3px;top:812.00px;font-size:12px;color:#bbb;transform:scaleX(0.9141);">Version Control</span>
<span class="u" style="left:164.5px;top:812.00px;font-size:12px;color:#bbb;transform:scaleX(0.8403);">Run</span>
<span class="u" style="left:219.6px;top:812.00px;font-size:12px;color:#bbb;transform:scaleX(0.8933);">Debug</span>
<span class="u" style="left:289.3px;top:812.00px;font-size:12px;color:#bbb;transform:scaleX(0.8565);">Python Packages</span>
<span class="u" style="left:409.2px;top:812.00px;font-size:12px;color:#bbb;transform:scaleX(0.8707);">TODO</span>
<span class="u" style="left:477.5px;top:812.00px;font-size:12px;color:#bbb;transform:scaleX(0.8757);">Python Console</span>
<span class="u" style="left:592.5px;top:812.00px;font-size:12px;color:#bbb;transform:scaleX(0.8641);">Problems</span>
<span class="u" style="left:675px;top:812.00px;font-size:12px;color:#bbb;transform:scaleX(0.9436);">Terminal</span>
<span class="u" style="left:757.5px;top:812.00px;font-size:12px;color:#bbb;transform:scaleX(0.8631);">ExcelReader</span>
<span class="u" style="left:855.3px;top:812.00px;font-size:12px;color:#bbb;transform:scaleX(0.8475);">Services</span>
<span class="u" style="left:27.5px;top:832.00px;font-size:13px;color:#bbb;transform:scaleX(0.9027);">Breakpoint reached (a minute ago)</span>
<span class="u" style="left:1226.7px;top:832.00px;font-size:13px;color:#a8a8a8;transform:scaleX(0.7822);">13:1</span>
<span class="u" style="left:1259.2px;top:832.00px;font-size:13px;color:#a8a8a8;transform:scaleX(0.7393);">CRLF</span>
<span class="u" style="left:1297.5px;top:832.00px;font-size:13px;color:#a8a8a8;transform:scaleX(0.8360);">UTF-8</span>
<span class="u" style="left:1339.8px;top:832.00px;font-size:13px;color:#a8a8a8;transform:scaleX(0.8454);">4 spaces</span>
<span class="u" style="left:1396.5px;top:832.00px;font-size:13px;color:#a8a8a8;transform:scaleX(0.8862);">Python 3.10 (exercise_openpyxl)</span>
<span class="u" style="left:51.7px;top:859.00px;font-size:11px;color:#1a1a1a;transform:scaleX(1.0090);">29°C</span>
<span class="u" style="left:51.7px;top:875.00px;font-size:11px;color:#4a4a4a;transform:scaleX(0.9682);">晴れ</span>
<span class="u" style="left:1531px;top:858.00px;font-size:11px;color:#1c1c1c;transform:scaleX(0.9896);">4:53</span>
<span class="u" style="left:1492px;top:874.00px;font-size:11px;color:#1c1c1c;transform:scaleX(1.0933);">2022/08/16</span>
<span class="u" style="left:12.6px;top:82.5px;font-size:12px;color:#e6e6e6;line-height:16px;transform-origin:50% 50%;transform:translate(-50%,-50%) rotate(-90deg) scaleX(0.8833);">Project</span>
<span class="u" style="left:12.1px;top:671.6px;font-size:11.5px;color:#b0b0b0;line-height:16px;transform-origin:50% 50%;transform:translate(-50%,-50%) rotate(-90deg) scaleX(0.8986);">Bookmarks</span>
<span class="u" style="left:12.1px;top:758.4px;font-size:11.5px;color:#b0b0b0;line-height:16px;transform-origin:50% 50%;transform:translate(-50%,-50%) rotate(-90deg) scaleX(0.9470);">Structure</span>
<span class="u" style="left:1588.3px;top:117px;font-size:11.5px;color:#b4b4b4;line-height:16px;transform-origin:50% 50%;transform:translate(-50%,-50%) rotate(90deg) scaleX(0.9658);">Notifications</span>
<span class="m" style="left:302.3px;top:88.00px;font-size:14px;color:#5c5f62;">1</span>
<span class="m" style="left:302.3px;top:112.00px;font-size:14px;color:#5c5f62;">2</span>
<span class="m" style="left:302.3px;top:136.00px;font-size:14px;color:#5c5f62;">3</span>
<span class="m" style="left:302.3px;top:160.00px;font-size:14px;color:#5c5f62;">4</span>
<span class="m" style="left:302.3px;top:184.00px;font-size:14px;color:#5c5f62;">5</span>
<span class="m" style="left:302.3px;top:208.00px;font-size:14px;color:#5c5f62;">6</span>
<span class="m" style="left:302.3px;top:232.00px;font-size:14px;color:#5c5f62;">7</span>
<span class="m" style="left:302.3px;top:256.00px;font-size:14px;color:#5c5f62;">8</span>
<span class="m" style="left:302.3px;top:280.00px;font-size:14px;color:#5c5f62;">9</span>
<span class="m" style="left:294.3px;top:304.00px;font-size:14px;color:#5c5f62;">10</span>
<span class="m" style="left:294.3px;top:328.00px;font-size:14px;color:#5c5f62;">11</span>
<span class="m" style="left:294.3px;top:352.00px;font-size:14px;color:#5c5f62;">12</span>
<span class="m" style="left:294.3px;top:376.00px;font-size:14px;color:#a4a3a3;">13</span>
<span class="m" style="left:294.3px;top:400.00px;font-size:14px;color:#5c5f62;">14</span>
<span class="m" style="left:294.3px;top:424.00px;font-size:14px;color:#5c5f62;">15</span>
<span class="m" style="left:358px;top:88.00px;font-size:14px;color:#a9b7c6;"><span style="color:#cc7832;">#</span> <span style="color:#9272a3;font-style:italic"><span class="j">リスト内にリスト</span></span></span>
<span class="m" style="left:358px;top:136.00px;font-size:14px;color:#a9b7c6;"><span class="j">リスト内の要素はリストです。</span></span>
<span class="m" style="left:358px;top:184.00px;font-size:14px;color:#a9b7c6;"><span style="color:#cc7832;">```</span><span style="color:#9272a3;font-style:italic">python</span></span>
<span class="m" style="left:358px;top:208.00px;font-size:14px;color:#a9b7c6;">result = <span style="color:#e9ef2c;font-weight:bold">[</span></span>
<span class="m" style="left:358px;top:232.00px;font-size:14px;color:#a9b7c6;">    [<span style="color:#6897bb;">1</span><span style="color:#cc7832;">,</span> <span style="color:#6897bb;">15973</span><span style="color:#cc7832;">,</span> <span style="color:#6d8a5c;">'<span class="j">愛知販売</span>'</span><span style="color:#cc7832;">,</span> <span style="color:#6d8a5c;">'<span class="j">○凹手数料</span>'</span>]<span style="color:#cc7832;">,</span></span>
<span class="m" style="left:358px;top:256.00px;font-size:14px;color:#a9b7c6;">    [<span style="color:#6897bb;">4</span><span style="color:#cc7832;">,</span> <span style="color:#6897bb;">3152</span><span style="color:#cc7832;">,</span> <span style="color:#6d8a5c;">'<span class="j">岐阜商船</span>'</span><span style="color:#cc7832;">,</span> <span style="color:#6d8a5c;">'<span class="j">○</span><span class="g">△</span><span class="j">制作料</span>'</span>]<span style="color:#cc7832;">,</span></span>
<span class="m" style="left:358px;top:280.00px;font-size:14px;color:#a9b7c6;">    [<span style="color:#6897bb;">5</span><span style="color:#cc7832;">,</span> <span style="color:#6897bb;">5884</span><span style="color:#cc7832;">,</span> <span style="color:#6d8a5c;">'<span class="j">岐阜商船</span>'</span><span style="color:#cc7832;">,</span> <span style="color:#6d8a5c;">'<span class="j">○</span><span class="g">△</span><span class="j">制作料</span>'</span>]<span style="color:#cc7832;">,</span></span>
<span class="m" style="left:358px;top:304.00px;font-size:14px;color:#a9b7c6;">    [<span style="color:#6897bb;">7</span><span style="color:#cc7832;">,</span> <span style="color:#6897bb;">2000</span><span style="color:#cc7832;">,</span> <span style="color:#6d8a5c;">'<span class="j">横浜航空</span>'</span><span style="color:#cc7832;">,</span> <span style="color:#6d8a5c;">'<span class="j">凹</span><span class="g">□</span><span class="j">商品売却</span>'</span>]<span style="color:#cc7832;">,</span></span>
<span class="m" style="left:358px;top:328.00px;font-size:14px;color:#a9b7c6;">    [<span style="color:#6897bb;">9</span><span style="color:#cc7832;">,</span> <span style="color:#6897bb;">3000</span><span style="color:#cc7832;">,</span> <span style="color:#6d8a5c;">'<span class="j">宮崎商船</span>'</span><span style="color:#cc7832;">,</span> <span style="color:#6d8a5c;">'<span class="j">凹</span><span class="g">□</span><span class="j">商品売却</span>'</span>]<span style="color:#cc7832;">,</span></span>
<span class="m" style="left:358px;top:352.00px;font-size:14px;color:#a9b7c6;">    [<span style="color:#6897bb;">10</span><span style="color:#cc7832;">,</span> <span style="color:#6897bb;">68000</span><span style="color:#cc7832;">,</span> <span style="color:#6d8a5c;">'<span class="j">愛媛不動産</span>'</span><span style="color:#cc7832;">,</span> <span style="color:#6d8a5c;">'<span class="g">△</span><span class="j">凹実施料</span>'</span>]<span style="color:#cc7832;">,</span></span>
<span class="m" style="left:358px;top:376.00px;font-size:14px;color:#a9b7c6;"><span style="color:#e9ef2c;font-weight:bold">]</span></span>
<span class="m" style="left:358px;top:400.00px;font-size:14px;color:#a9b7c6;"><span style="color:#cc7832;">```</span></span>
<span class="u" style="left:1339.3px;top:867.00px;font-size:19px;color:#f8fafc;transform:scaleX(0.7135);font-family:'Liberation Serif',serif;">A</span>
<div style="left:358px;top:376px;width:2px;height:19px;background:#d8d8d8"></div>
</div></body></html>
